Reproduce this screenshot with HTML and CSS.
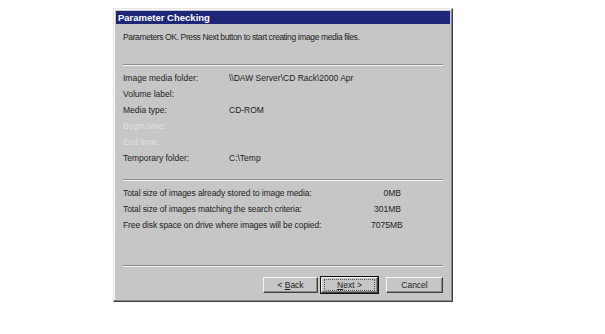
FILE: index.html
```html
<!DOCTYPE html>
<html lang="en">
<head>
    <meta charset="UTF-8">
    <title>Parameter Checking</title>
    <link rel="stylesheet" href="styles.css">
</head>
<body>
    <div class="dialog">
        <div class="titlebar">Parameter Checking</div>
        <div class="content">
            <p class="intro">Parameters OK. Press Next button to start creating image media files.</p>
            <hr class="sep">
            <div class="params">
                <div class="row"><span class="label">Image media folder:</span><span class="value">\\DAW Server\CD Rack\2000 Apr</span></div>
                <div class="row"><span class="label">Volume label:</span><span class="value"></span></div>
                <div class="row"><span class="label">Media type:</span><span class="value">CD-ROM</span></div>
                <div class="row disabled"><span class="label">Begin time:</span><span class="value"></span></div>
                <div class="row disabled"><span class="label">End time:</span><span class="value"></span></div>
                <div class="row"><span class="label">Temporary folder:</span><span class="value">C:\Temp</span></div>
            </div>
            <hr class="sep">
            <div class="sizes">
                <div class="row"><span class="label wide">Total size of images already stored to image media:</span><span class="num">0MB</span></div>
                <div class="row"><span class="label wide">Total size of images matching the search criteria:</span><span class="num">301MB</span></div>
                <div class="row"><span class="label wide">Free disk space on drive where images will be copied:</span><span class="num">7075MB</span></div>
            </div>
            <hr class="sep bottom">
            <div class="buttons">
                <button class="btn">&lt; <u>B</u>ack</button>
                <button class="btn default"><span class="focus"><u>N</u>ext &gt;</span></button>
                <button class="btn cancel">Cancel</button>
            </div>
        </div>
    </div>
</body>
</html>
```

FILE: styles.css
```css
body {
    margin: 0;
    background: #fff;
    font-family: "Liberation Sans", Arial, sans-serif;
    font-size: 8.5px;
    color: #1e1e1e;
}
.dialog {
    margin: 8px 0 0 113px;
    width: 340px;
    height: 294px;
    box-sizing: border-box;
    background: #c6c6c6;
    border: 1px solid;
    border-color: #e4e4e4 #404040 #404040 #e4e4e4;
    box-shadow: inset -1px -1px 0 #8a8a8a, inset 1px 1px 0 #fafafa;
    padding: 2px;
    display: flex;
    flex-direction: column;
}
.titlebar {
    background: #1e2678;
    color: #fff;
    font-weight: bold;
    font-size: 9.5px;
    height: 13px;
    line-height: 13px;
    padding-left: 2px;
}
.content {
    flex: 1;
    padding: 0 7px 0 7px;
    display: flex;
    flex-direction: column;
}
.intro {
    margin: 8px 0 0 0;
    height: 29px;
    letter-spacing: -0.38px;
}
.sep {
    margin: 3px 0 0 0;
    border: 0;
    border-top: 1px solid #8c8c8c;
    border-bottom: 1px solid #f4f4f4;
    height: 0;
}
.params {
    padding-top: 4px;
    height: 106px;
}
.row {
    display: flex;
    height: 16px;
    line-height: 16px;
}
.label {
    width: 106px;
}
.label.wide {
    width: 248px;
    letter-spacing: -0.1px;
}
.disabled {
    color: #e0e0e0;
}
.sizes {
    padding-top: 4px;
    height: 76px;
}
.num {
    width: 30px;
    text-align: right;
}
.sep.bottom {
    margin-top: 4px;
}
.buttons {
    display: flex;
    justify-content: flex-end;
    gap: 3px;
    margin-top: 10px;
}
.btn {
    font-family: inherit;
    font-size: 8.5px;
    color: #1e1e1e;
    width: 55px;
    height: 16px;
    padding: 0;
    background: #c6c6c6;
    border: 1px solid;
    border-color: #f4f4f4 #404040 #404040 #f4f4f4;
    box-shadow: inset -1px -1px 0 #8a8a8a;
}
.btn.default {
    width: 57px;
    outline: 1px solid #111;
}
.btn .focus {
    display: block;
    margin: 1px 2px;
    border: 1px dotted #555;
    line-height: 10px;
}
.btn.cancel {
    width: 57px;
    margin-left: 5px;
}
```
